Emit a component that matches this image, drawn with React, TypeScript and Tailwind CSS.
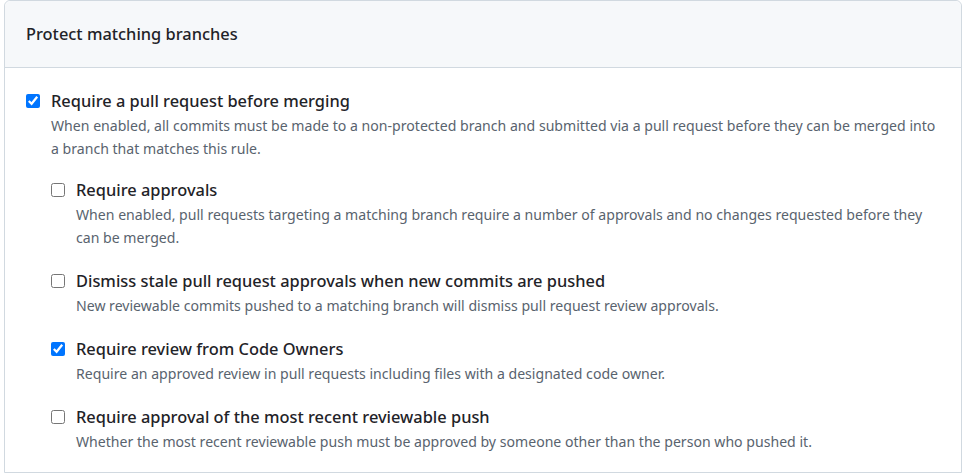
const RULES = [
    {
        label: 'Require approvals',
        desc: 'When enabled, pull requests targeting a matching branch require a number of approvals and no changes requested before they can be merged.',
        checked: false,
    },
    {
        label: 'Dismiss stale pull request approvals when new commits are pushed',
        desc: 'New reviewable commits pushed to a matching branch will dismiss pull request review approvals.',
        checked: false,
    },
    {
        label: 'Require review from Code Owners',
        desc: 'Require an approved review in pull requests including files with a designated code owner.',
        checked: true,
    },
    {
        label: 'Require approval of the most recent reviewable push',
        desc: 'Whether the most recent reviewable push must be approved by someone other than the person who pushed it.',
        checked: false,
    },
];

function Rule({ label, desc, checked }: { label: string; desc: string; checked: boolean }) {
    return (
        <div className="flex items-start gap-[11px]">
            <input
                type="checkbox"
                defaultChecked={checked}
                className="mt-[6px] w-[14px] h-[14px] shrink-0 m-0"
            />
            <div className="flex-1">
                <label className="block text-[16.4px] leading-[26px] font-medium text-[#1f2328]">{label}</label>
                <p className="text-[14.1px] leading-[23px] text-[#59636e]">{desc}</p>
            </div>
        </div>
    );
}

export default function App() {
    return (
        <div className="w-[963px] h-[473px] bg-white overflow-hidden pl-[4px] font-['Noto_Sans',sans-serif]">
            <div className="w-[958px] border border-[#d1d9e0] rounded-t-md">
                <div className="h-[67px] bg-[#f6f8fa] border-b border-[#d1d9e0] rounded-t-md flex items-center px-[21px]">
                    <h3 className="text-[16.4px] font-medium text-[#1f2328]">Protect matching branches</h3>
                </div>
                <div className="px-[21px] pt-[20px] pb-[19px]">
                    <Rule
                        label="Require a pull request before merging"
                        desc="When enabled, all commits must be made to a non-protected branch and submitted via a pull request before they can be merged into a branch that matches this rule."
                        checked
                    />
                    <div className="pl-[25px] pt-[17px] flex flex-col gap-[19px]">
                        {RULES.map((r, i) => (
                            <Rule key={i} {...r} />
                        ))}
                    </div>
                </div>
            </div>
        </div>
    );
}
